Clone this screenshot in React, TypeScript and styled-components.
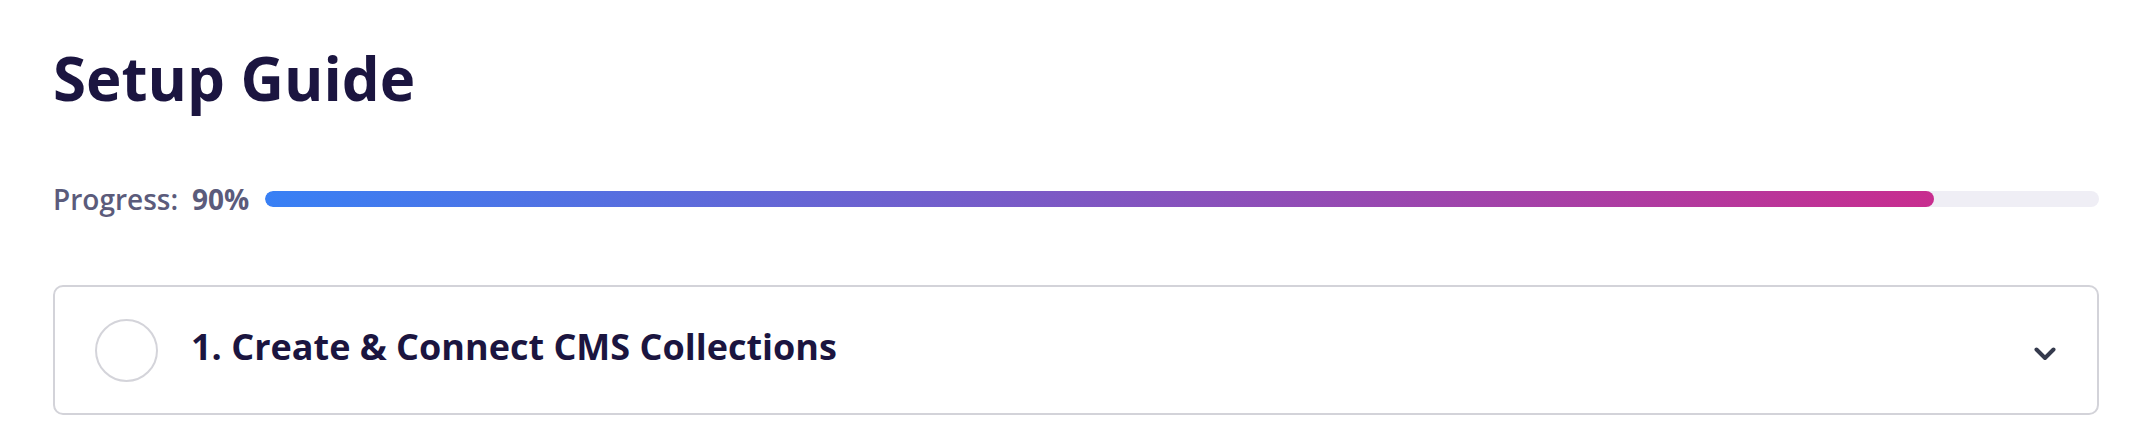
import React from "react";
import styled, { createGlobalStyle } from "styled-components";

const Global = createGlobalStyle`
  html, body { margin: 0; padding: 0; background: #ffffff; }
  body { font-family: "Open Sans", "Noto Sans", sans-serif; }
  * { box-sizing: border-box; }
`;

const Page = styled.div`
  padding: 37px 43px 0 53px;
`;

const Title = styled.h1`
  margin: 0;
  font-size: 60px;
  line-height: 82px;
  font-weight: 700;
  color: #1b1540;
`;

const ProgressRow = styled.div`
  display: flex;
  align-items: center;
  margin-top: 60px;
  height: 40px;
`;

const ProgressLabel = styled.span`
  font-size: 28px;
  font-weight: 600;
  color: #5b5b7b;
  white-space: nowrap;
`;

const ProgressValue = styled.span`
  font-size: 28px;
  font-weight: 700;
  color: #5b5b7b;
  margin-left: 14px;
  white-space: nowrap;
`;

const Track = styled.div`
  flex: 1;
  height: 16px;
  margin-left: 16px;
  border-radius: 8px;
  background: #efeef5;
  overflow: hidden;
`;

const Fill = styled.div`
  height: 100%;
  border-radius: 8px;
  background: linear-gradient(90deg, #3880f5 0%, #c82d8f 100%);
`;

const Card = styled.div`
  margin-top: 66px;
  height: 130px;
  border: 2px solid #d3d3d9;
  border-radius: 10px;
  display: flex;
  align-items: center;
  padding: 0 41px 0 40px;
`;

const Check = styled.div`
  width: 63px;
  height: 63px;
  border-radius: 50%;
  border: 2px solid #d4d4da;
  flex-shrink: 0;
`;

const StepTitle = styled.div`
  margin-left: 33px;
  margin-bottom: 8px;
  flex: 1;
  font-size: 36px;
  font-weight: 700;
  color: #1b1540;
`;

const Chevron = styled.svg`
  width: 22px;
  height: 14px;
  margin-top: 8px;
  flex-shrink: 0;
`;

export default function App() {
  const progress = 90;
  return (
    <>
      <Global />
      <Page>
        <Title>Setup Guide</Title>
        <ProgressRow>
          <ProgressLabel>Progress:</ProgressLabel>
          <ProgressValue>{progress}%</ProgressValue>
          <Track>
            <Fill style={{ width: `${progress + 1}%` }} />
          </Track>
        </ProgressRow>
        <Card>
          <Check />
          <StepTitle>1. Create &amp; Connect CMS Collections</StepTitle>
          <Chevron viewBox="0 0 22 14">
            <path
              d="M2.5 2.5 L11 11 L19.5 2.5"
              fill="none"
              stroke="#353a4d"
              strokeWidth="4"
              strokeLinecap="round"
              strokeLinejoin="round"
            />
          </Chevron>
        </Card>
      </Page>
    </>
  );
}
